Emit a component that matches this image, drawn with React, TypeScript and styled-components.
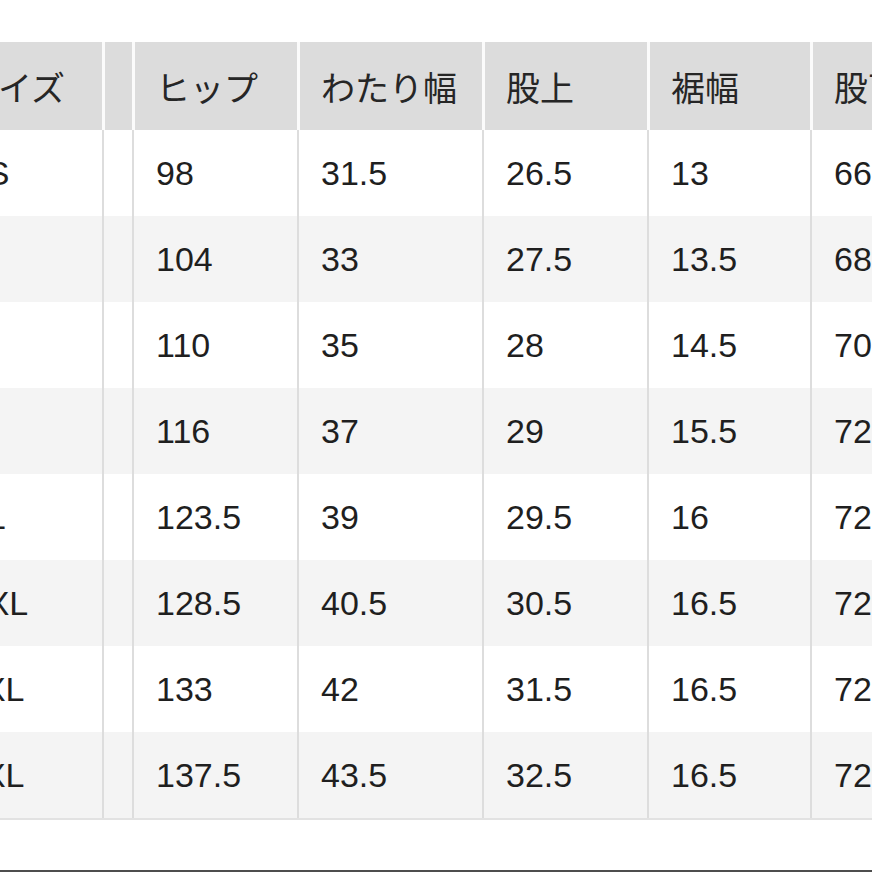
import React from 'react';
import styled, { createGlobalStyle } from 'styled-components';

type SizeRow = {
    size: string;
    hip: string;
    thigh: string;
    rise: string;
    hem: string;
    inseam: string;
};

const columns = ['ヒップ', 'わたり幅', '股上', '裾幅', '股下'];

const rows: SizeRow[] = [
    { size: 'XS', hip: '98', thigh: '31.5', rise: '26.5', hem: '13', inseam: '66' },
    { size: 'S', hip: '104', thigh: '33', rise: '27.5', hem: '13.5', inseam: '68' },
    { size: 'M', hip: '110', thigh: '35', rise: '28', hem: '14.5', inseam: '70' },
    { size: 'L', hip: '116', thigh: '37', rise: '29', hem: '15.5', inseam: '72' },
    { size: 'XL', hip: '123.5', thigh: '39', rise: '29.5', hem: '16', inseam: '72' },
    { size: 'XXL', hip: '128.5', thigh: '40.5', rise: '30.5', hem: '16.5', inseam: '72' },
    { size: '3XL', hip: '133', thigh: '42', rise: '31.5', hem: '16.5', inseam: '72' },
    { size: '4XL', hip: '137.5', thigh: '43.5', rise: '32.5', hem: '16.5', inseam: '72' },
];

// widths of each column, border included
const colWidths = [162, 30, 165, 185, 165, 163, 165];

const App: React.FC = () => {
    return (
        <>
            <GlobalStyle />
            <Page>
                <TableViewport>
                    <SizeTable>
                        <colgroup>
                            {colWidths.map((w, i) => (
                                <col key={i} style={{ width: w }} />
                            ))}
                        </colgroup>
                        <thead>
                            <tr>
                                <HeadCell $first>サイズ</HeadCell>
                                <HeadCell />
                                {columns.map((label) => (
                                    <HeadCell key={label}>{label}</HeadCell>
                                ))}
                            </tr>
                        </thead>
                        <tbody>
                            {rows.map((row, index) => (
                                <BodyRow key={row.size} $striped={index % 2 === 1}>
                                    <BodyCell $first>{row.size}</BodyCell>
                                    <BodyCell />
                                    <BodyCell>{row.hip}</BodyCell>
                                    <BodyCell>{row.thigh}</BodyCell>
                                    <BodyCell>{row.rise}</BodyCell>
                                    <BodyCell>{row.hem}</BodyCell>
                                    <BodyCell>{row.inseam}</BodyCell>
                                </BodyRow>
                            ))}
                        </tbody>
                    </SizeTable>
                </TableViewport>
                <BottomEdge />
            </Page>
        </>
    );
};

export default App;

const GlobalStyle = createGlobalStyle`
    html, body {
        margin: 0;
        padding: 0;
        background: #ffffff;
    }
    body {
        font-family: "Liberation Sans", "Noto Sans CJK JP", sans-serif;
        color: #222222;
    }
`;

const Page = styled.div`
    width: 872px;
    height: 872px;
    overflow: hidden;
    display: flex;
    flex-direction: column;
    background: #ffffff;
`;

const TableViewport = styled.div`
    flex: 1;
    overflow: hidden;
    padding-top: 42px;
`;

const SizeTable = styled.table`
    margin-left: -60px;
    width: 1035px;
    table-layout: fixed;
    border-collapse: separate;
    border-spacing: 0;
    border-bottom: 2px solid #e2e2e2;
    font-size: 34px;
`;

const HeadCell = styled.th<{ $first?: boolean }>`
    height: 88px;
    padding: 0 0 0 ${(p) => (p.$first ? '24px' : '21px')};
    background: #dcdcdc;
    border-left: ${(p) => (p.$first ? 'none' : '3px solid #fbfbfb')};
    text-align: left;
    font-weight: 400;
    color: #262626;
    white-space: nowrap;
    vertical-align: middle;
`;

const BodyRow = styled.tr<{ $striped: boolean }>`
    background: ${(p) => (p.$striped ? '#f4f4f4' : '#ffffff')};
`;

const BodyCell = styled.td<{ $first?: boolean }>`
    height: 86px;
    padding: 0 0 0 ${(p) => (p.$first ? '24px' : '22px')};
    border-left: ${(p) => (p.$first ? 'none' : '2px solid #dddddd')};
    text-align: left;
    color: #1f1f1f;
    white-space: nowrap;
    vertical-align: middle;
`;

const BottomEdge = styled.div`
    height: 2px;
    background: #4d4d4d;
`;
